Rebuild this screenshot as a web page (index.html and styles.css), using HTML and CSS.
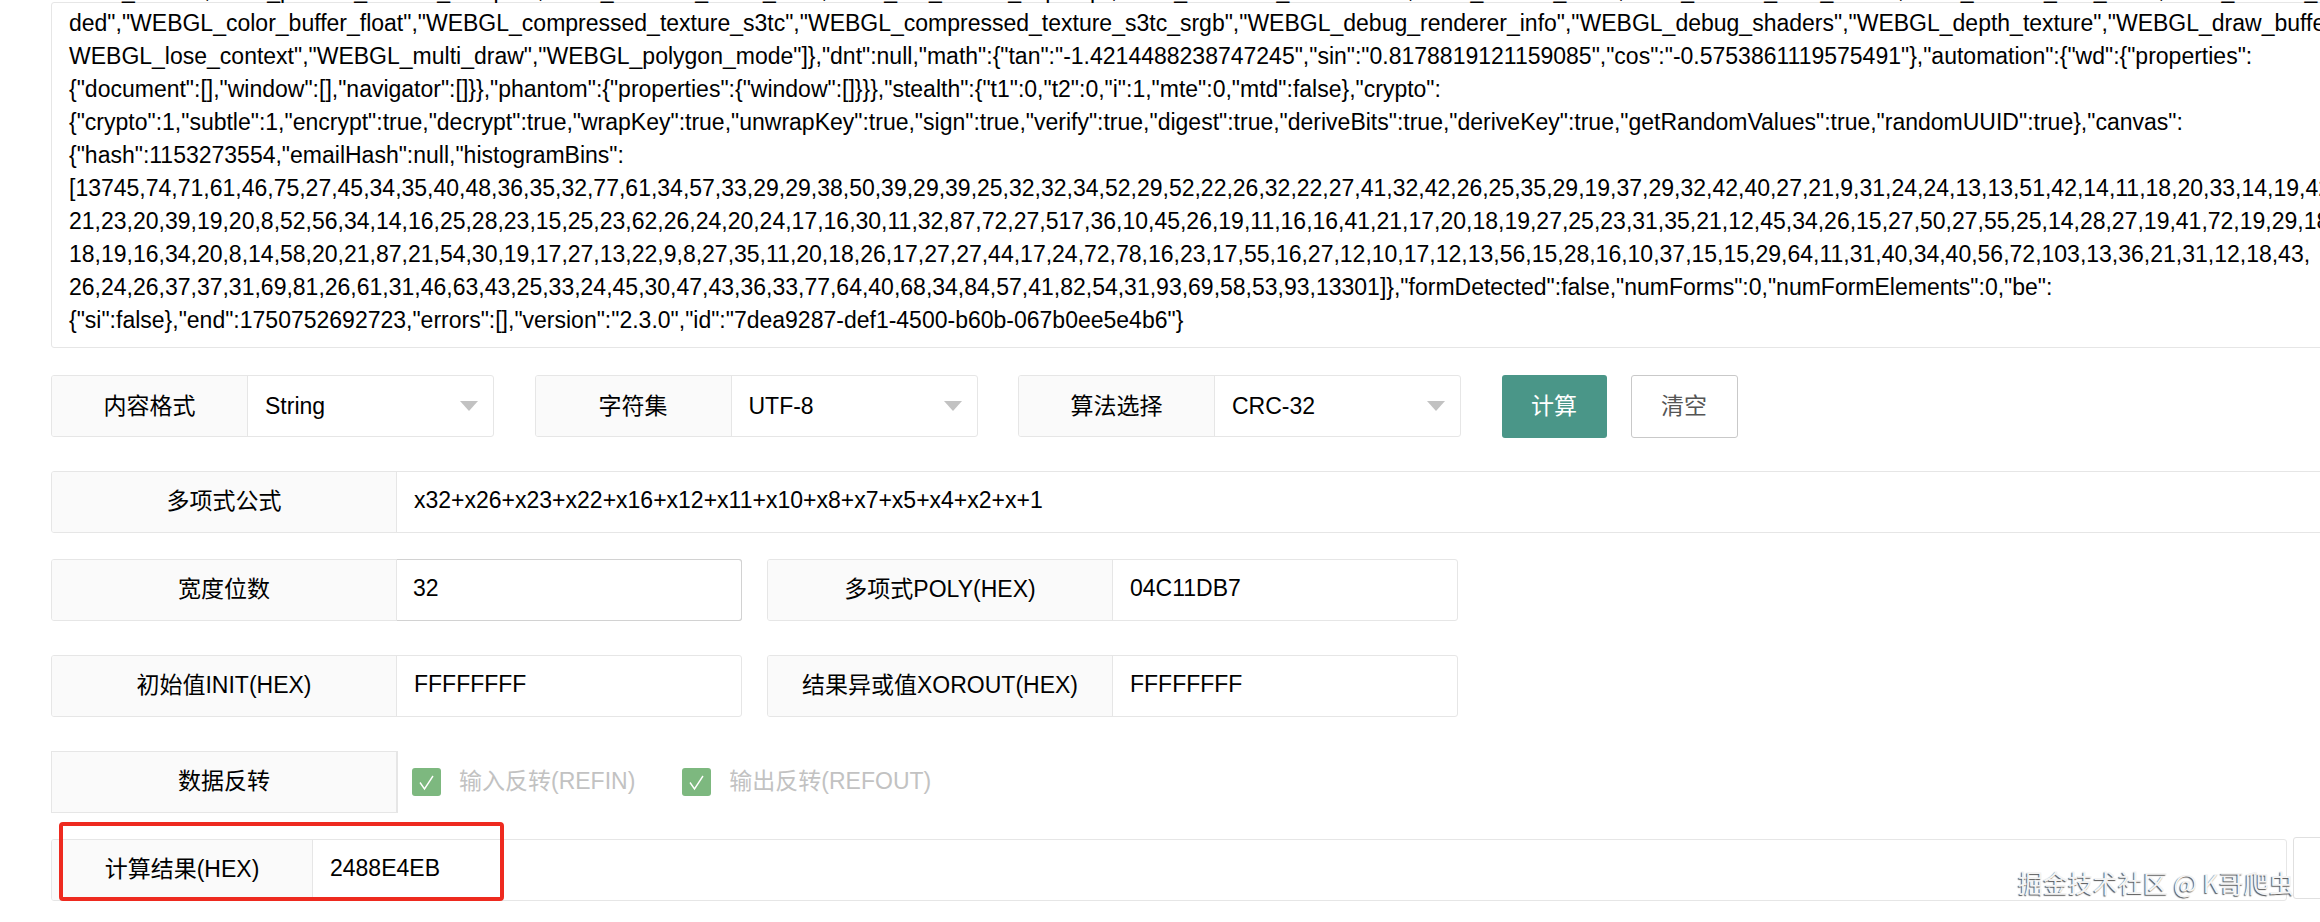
FILE: index.html
```html
<!DOCTYPE html>
<html lang="zh-CN">
<head>
<meta charset="utf-8">
<title>CRC</title>
<link rel="stylesheet" href="styles.css">
</head>
<body>
<main class="page">
  <div class="textbox">
    <div class="line line-cut">"EXT_sRGB","KHR_parallel_shader_compile","OES_element_index_uint","OES_fbo_render_mipmap","OES_standard_derivatives","OES_texture_float","OES_texture_float_linear","OES_texture_half_float","OES_texture_half_float_linear","OES_vertex_array_object","WEBGL_blend_func_exten</div>
    <div class="line">ded","WEBGL_color_buffer_float","WEBGL_compressed_texture_s3tc","WEBGL_compressed_texture_s3tc_srgb","WEBGL_debug_renderer_info","WEBGL_debug_shaders","WEBGL_depth_texture","WEBGL_draw_buffers",</div>
    <div class="line">WEBGL_lose_context","WEBGL_multi_draw","WEBGL_polygon_mode"]},"dnt":null,"math":{"tan":"-1.4214488238747245","sin":"0.8178819121159085","cos":"-0.5753861119575491"},"automation":{"wd":{"properties":</div>
    <div class="line">{"document":[],"window":[],"navigator":[]}},"phantom":{"properties":{"window":[]}}},"stealth":{"t1":0,"t2":0,"i":1,"mte":0,"mtd":false},"crypto":</div>
    <div class="line">{"crypto":1,"subtle":1,"encrypt":true,"decrypt":true,"wrapKey":true,"unwrapKey":true,"sign":true,"verify":true,"digest":true,"deriveBits":true,"deriveKey":true,"getRandomValues":true,"randomUUID":true},"canvas":</div>
    <div class="line">{"hash":1153273554,"emailHash":null,"histogramBins":</div>
    <div class="line">[13745,74,71,61,46,75,27,45,34,35,40,48,36,35,32,77,61,34,57,33,29,29,38,50,39,29,39,25,32,32,34,52,29,52,22,26,32,22,27,41,32,42,26,25,35,29,19,37,29,32,42,40,27,21,9,31,24,24,13,13,51,42,14,11,18,20,33,14,19,42,</div>
    <div class="line">21,23,20,39,19,20,8,52,56,34,14,16,25,28,23,15,25,23,62,26,24,20,24,17,16,30,11,32,87,72,27,517,36,10,45,26,19,11,16,16,41,21,17,20,18,19,27,25,23,31,35,21,12,45,34,26,15,27,50,27,55,25,14,28,27,19,41,72,19,29,18,</div>
    <div class="line">18,19,16,34,20,8,14,58,20,21,87,21,54,30,19,17,27,13,22,9,8,27,35,11,20,18,26,17,27,27,44,17,24,72,78,16,23,17,55,16,27,12,10,17,12,13,56,15,28,16,10,37,15,15,29,64,11,31,40,34,40,56,72,103,13,36,21,31,12,18,43,</div>
    <div class="line">26,24,26,37,37,31,69,81,26,61,31,46,63,43,25,33,24,45,30,47,43,36,33,77,64,40,68,34,84,57,41,82,54,31,93,69,58,53,93,13301]},"formDetected":false,"numForms":0,"numFormElements":0,"be":</div>
    <div class="line">{"si":false},"end":1750752692723,"errors":[],"version":"2.3.0","id":"7dea9287-def1-4500-b60b-067b0ee5e4b6"}</div>
  </div>

  <div class="row row-1">
    <div class="field w-select">
      <div class="label">内容格式</div>
      <div class="value select">String<span class="caret"></span></div>
    </div>
    <div class="field w-select">
      <div class="label">字符集</div>
      <div class="value select">UTF-8<span class="caret"></span></div>
    </div>
    <div class="field w-select">
      <div class="label">算法选择</div>
      <div class="value select">CRC-32<span class="caret"></span></div>
    </div>
    <button class="btn btn-primary" type="button">计算</button>
    <button class="btn btn-plain" type="button">清空</button>
  </div>

  <div class="row row-2">
    <div class="field grow">
      <div class="label label-wide">多项式公式</div>
      <div class="value">x32+x26+x23+x22+x16+x12+x11+x10+x8+x7+x5+x4+x2+x+1</div>
    </div>
  </div>

  <div class="row row-3">
    <div class="field w-half">
      <div class="label label-wide">宽度位数</div>
      <div class="value value-focus">32</div>
    </div>
    <div class="field w-half">
      <div class="label label-wide">多项式POLY(HEX)</div>
      <div class="value">04C11DB7</div>
    </div>
  </div>

  <div class="row row-4">
    <div class="field w-half">
      <div class="label label-wide">初始值INIT(HEX)</div>
      <div class="value">FFFFFFFF</div>
    </div>
    <div class="field w-half">
      <div class="label label-wide">结果异或值XOROUT(HEX)</div>
      <div class="value">FFFFFFFF</div>
    </div>
  </div>

  <div class="row row-5">
    <div class="field field-label-only">
      <div class="label label-wide">数据反转</div>
    </div>
    <div class="check check-first">
      <svg class="box" width="29" height="28" viewBox="0 0 29 28"><rect width="29" height="28" rx="3" fill="#7db87f"/><path d="M8 14.5l4.5 6.5L21 8" fill="none" stroke="#fff" stroke-width="1.4"/></svg>
      <span class="check-text">输入反转(REFIN)</span>
    </div>
    <div class="check check-second">
      <svg class="box" width="29" height="28" viewBox="0 0 29 28"><rect width="29" height="28" rx="3" fill="#7db87f"/><path d="M8 14.5l4.5 6.5L21 8" fill="none" stroke="#fff" stroke-width="1.4"/></svg>
      <span class="check-text">输出反转(REFOUT)</span>
    </div>
  </div>

  <div class="row row-6">
    <div class="field w-result">
      <div class="label label-result">计算结果(HEX)</div>
      <div class="value">2488E4EB</div>
    </div>
    <div class="copy-box"></div>
  </div>
</main>
<div class="highlight"></div>
<div class="watermark">掘金技术社区 @ K哥爬虫</div>
</body>
</html>
```

FILE: styles.css
```css
* {
  box-sizing: border-box;
}

html,
body {
  margin: 0;
  height: 922px;
  overflow: hidden;
  background: #fff;
}

body {
  position: relative;
  color: #000;
  font-family: "Liberation Sans", "Noto Sans CJK SC", sans-serif;
  font-size: 23px;
}

.page {
  width: 2420px;
  padding: 2px 0 0 51px;
}

.textbox {
  height: 346px;
  padding: 4px 0 0 17px;
  border: 1px solid #e6e6e6;
  border-radius: 3px;
}

.line {
  height: 33px;
  line-height: 33px;
  white-space: nowrap;
}

.line-cut {
  margin-top: -33px;
}

.row {
  display: flex;
  align-items: flex-start;
}

.row-1 {
  margin-top: 27px;
}

.row-2 {
  margin-top: 33px;
}

.row-3 {
  margin-top: 26px;
  gap: 25px;
}

.row-4 {
  margin-top: 34px;
  gap: 25px;
}

.row-5 {
  margin-top: 34px;
}

.row-6 {
  margin-top: 26px;
}

.field {
  display: flex;
  height: 62px;
  border: 1px solid #e6e6e6;
  border-radius: 3px;
}

.grow {
  flex: 1;
}

.w-select {
  width: 443px;
  margin-right: 40.5px;
}

.w-half {
  width: 691px;
}

.w-result {
  width: 2236px;
}

.field-label-only {
  width: 347px;
  border-radius: 0;
}

.label {
  display: flex;
  flex: none;
  align-items: center;
  justify-content: center;
  width: 196px;
  padding-bottom: 7px;
  background: #fafafa;
  border-right: 1px solid #e6e6e6;
  border-radius: 2px 0 0 2px;
}

.row-1 .label {
  padding-bottom: 5px;
}

.label-wide {
  width: 345px;
}

.label-result {
  width: 261px;
}

.value {
  display: flex;
  flex: 1;
  align-items: center;
  padding-bottom: 4px;
  padding-left: 17px;
}

.row-1 .value {
  padding-bottom: 0;
}

.value-focus {
  margin: -1px -1px -1px 0;
  padding-left: 16px;
  border: 1px solid #d2d2d2;
  border-left: 0;
  border-radius: 0 3px 3px 0;
}

.select {
  position: relative;
}

.caret {
  position: absolute;
  top: 25px;
  right: 15px;
  width: 0;
  height: 0;
  border-style: solid;
  border-width: 10px 9px 0;
  border-color: #c2c2c2 transparent transparent;
}

.btn {
  height: 63px;
  padding: 0 0 6px;
  border-radius: 3px;
  font-family: inherit;
  font-size: 23px;
}

.btn-primary {
  width: 105px;
  background: #4a9688;
  border: 0;
  color: #fff;
}

.btn-plain {
  width: 107px;
  margin-left: 24px;
  background: #fff;
  border: 1px solid #c9c9c9;
  color: #555;
}

.check {
  display: flex;
  align-items: center;
  gap: 18px;
  height: 62px;
  color: #c2c2c2;
}

.check-text {
  padding-bottom: 6px;
}

.check-first {
  margin-left: 14px;
}

.check-second {
  margin-left: 47px;
}

.box {
  flex: none;
}

.copy-box {
  flex: none;
  width: 120px;
  height: 62px;
  margin: -2px 0 0 6px;
  border: 1px solid #e0e0e0;
  border-radius: 3px;
}

.highlight {
  position: absolute;
  top: 822px;
  left: 59px;
  width: 445px;
  height: 79px;
  border: 4px solid #ee2a1f;
  border-radius: 4px;
}

.watermark {
  position: absolute;
  top: 864px;
  left: 2018px;
  color: #f4f4f4;
  font-family: "Noto Sans CJK SC", sans-serif;
  font-size: 25px;
  line-height: 36px;
  white-space: nowrap;
  text-shadow: -1px 1px 1px #555;
}
```
